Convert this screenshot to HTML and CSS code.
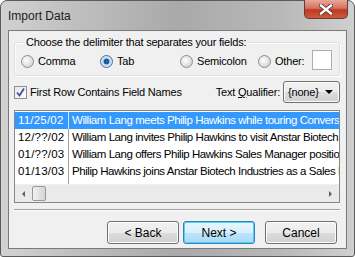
FILE: index.html
```html
<!DOCTYPE html>
<html lang="en">
<head>
    <meta charset="UTF-8">
    <title>Import Data</title>
    <link rel="stylesheet" href="styles.css">
</head>
<body>
    <div class="window">
        <div class="titlebar">
            <span class="title">Import Data</span>
            <div class="close">
                <svg width="14" height="11" viewBox="0 0 14 11">
                    <path d="M2 1.5 L12 9.5 M12 1.5 L2 9.5" stroke="#4a2a28" stroke-width="4" stroke-linecap="square"/>
                    <path d="M2 1.5 L12 9.5 M12 1.5 L2 9.5" stroke="#fff" stroke-width="2.4" stroke-linecap="square"/>
                </svg>
            </div>
        </div>
        <div class="client">
            <div class="group">
                <div class="legend">Choose the delimiter that separates your fields:</div>
                <div class="radios">
                    <label class="radio"><span class="dot"></span>Comma</label>
                    <label class="radio checked"><span class="dot"></span>Tab</label>
                    <label class="radio"><span class="dot"></span>Semicolon</label>
                    <label class="radio"><span class="dot"></span>Other:</label>
                    <span class="other-box"></span>
                </div>
            </div>

            <div class="options">
                <label class="check">
                    <span class="box">
                        <svg width="11" height="11" viewBox="0 0 11 11">
                            <path d="M2 5.5 L4.5 8.5 L9 1.5" fill="none" stroke="#3b50a0" stroke-width="1.8"/>
                        </svg>
                    </span>
                    First Row Contains Field Names
                </label>
                <span class="qualifier">Text <u>Q</u>ualifier:</span>
                <div class="select">
                    <span>{none}</span>
                    <span class="arrow"></span>
                </div>
            </div>

            <div class="listbox">
                <div class="rows">
                    <div class="row selected"><span class="date">11/25/02</span><span class="desc">William Lang meets Philip Hawkins while touring Conversion</span></div>
                    <div class="row"><span class="date">12/??/02</span><span class="desc">William Lang invites Philip Hawkins to visit Anstar Biotech</span></div>
                    <div class="row"><span class="date">01/??/03</span><span class="desc">William Lang offers Philip Hawkins Sales Manager position</span></div>
                    <div class="row"><span class="date">01/13/03</span><span class="desc">Philip Hawkins joins Anstar Biotech Industries as a Sales Manager</span></div>
                    <div class="row empty"><span class="date"></span><span class="desc"></span></div>
                </div>
                <div class="hscroll">
                    <span class="arr left"></span>
                    <div class="track"><span class="thumb"></span></div>
                    <span class="arr right"></span>
                </div>
            </div>

            <div class="separator"></div>

            <div class="buttons">
                <button class="btn">&lt; Back</button>
                <button class="btn default">Next &gt;</button>
                <button class="btn cancel">Cancel</button>
            </div>
        </div>
    </div>
</body>
</html>
```

FILE: styles.css
```css
body {
    margin: 0;
    width: 355px;
    height: 257px;
    overflow: hidden;
    background: #fff;
    font-family: "Liberation Sans", Arial, sans-serif;
    font-size: 11px;
    letter-spacing: -0.2px;
    color: #000;
}

.window {
    box-sizing: border-box;
    width: 355px;
    height: 257px;
    border: 1px solid #5b5b5b;
    border-radius: 7px 7px 3px 3px;
    background: linear-gradient(90deg, #d2d2d2 0%, #c0c0c0 20%, #a9a9a9 50%, #b9b9b9 80%, #cfcfcf 100%);
    display: flex;
    flex-direction: column;
}

.titlebar {
    height: 29px;
    display: flex;
    align-items: flex-start;
    padding: 0 6px 0 7px;
}

.title {
    font-size: 12px;
    letter-spacing: 0;
    margin-top: 8px;
    color: #1b1b1b;
}

.close {
    margin-left: auto;
    margin-top: -1px;
    width: 44px;
    height: 19px;
    box-sizing: border-box;
    border: 1px solid #6b3a36;
    border-top: none;
    border-radius: 0 0 5px 5px;
    background: linear-gradient(#e8a89b 0%, #d6735e 45%, #c0391f 55%, #cc5a3c 100%);
    display: flex;
    align-items: center;
    justify-content: center;
}

.client {
    flex: 1;
    margin: 0 7px 7px 7px;
    border: 1px solid #7a7a7a;
    background: #f0f0f0;
    padding: 11px 6px 0 5px;
    display: flex;
    flex-direction: column;
}

.group {
    border: 1px solid #d5dfe5;
    border-radius: 3px;
    height: 32px;
    box-shadow: inset 1px 1px 0 #fff, 1px 1px 0 #fff;
}

.legend {
    background: #f0f0f0;
    margin: -7px 0 0 8px;
    padding: 0 3px;
    width: max-content;
    line-height: 13px;
}

.radios {
    display: flex;
    align-items: center;
    margin: 3px 0 0 6px;
}

.radio {
    display: flex;
    align-items: center;
    gap: 4px;
}

.radio:nth-child(1) { width: 79px; }
.radio:nth-child(2) { width: 80px; }
.radio:nth-child(3) { width: 78px; }

.dot {
    width: 11px;
    height: 11px;
    border-radius: 50%;
    border: 1px solid #8d8d8d;
    background: radial-gradient(circle at 40% 40%, #ffffff 0%, #e6e6e6 45%, #c8c8c8 100%);
}

.radio.checked .dot {
    border-color: #4a6e9a;
    background: radial-gradient(circle, #1e7fd0 0%, #0d4f8e 30%, #bcd4ea 42%, #f2f6fa 100%);
}

.other-box {
    margin-left: 8px;
    margin-top: -2px;
    width: 18px;
    height: 18px;
    border: 1px solid #abadb3;
    background: #fff;
}

.options {
    display: flex;
    align-items: center;
    margin-top: 5px;
    height: 22px;
}

.check {
    display: flex;
    align-items: center;
    gap: 3px;
}

.box {
    width: 11px;
    height: 11px;
    border: 1px solid #8e8f8f;
    background: linear-gradient(135deg, #e6e6e6, #fff);
    display: flex;
}

.qualifier {
    margin-left: auto;
    margin-right: 3px;
}

.select {
    width: 45px;
    height: 20px;
    border: 1px solid #707070;
    border-radius: 3px;
    background: linear-gradient(#f2f2f2 0%, #ebebeb 50%, #dddddd 51%, #cfcfcf 100%);
    display: flex;
    align-items: center;
    justify-content: space-between;
    padding: 0 6px 0 4px;
    box-shadow: inset 0 0 0 1px #fcfcfc;
}

.arrow {
    width: 0;
    height: 0;
    border-left: 4px solid transparent;
    border-right: 4px solid transparent;
    border-top: 4px solid #000;
}

.listbox {
    margin-top: 7px;
    height: 91px;
    border: 1px solid #828790;
    background: #fff;
    display: flex;
    flex-direction: column;
    overflow: hidden;
}

.rows {
    flex: 1;
    overflow: hidden;
    padding-top: 1px;
}

.row {
    display: flex;
    height: 17px;
    line-height: 17px;
    white-space: nowrap;
    font-size: 11.5px;
    letter-spacing: -0.45px;
}

.row.empty {
    height: 6px;
}

.date {
    width: 54px;
    flex: none;
    padding-left: 3px;
    box-sizing: border-box;
    border-right: 1px solid #a0a0a0;
    letter-spacing: 0.2px;
}

.desc {
    padding-left: 3px;
}

.row.selected {
    background: #3399ff;
    color: #fff;
}

.row.selected .date {
    border-right-color: #cce4ff;
}

.hscroll {
    height: 17px;
    display: flex;
    align-items: center;
    background: #eaeaea;
    border-top: 1px solid #f0f0f0;
}

.arr {
    width: 17px;
    height: 17px;
    display: flex;
    align-items: center;
    justify-content: center;
}

.arr::before {
    content: "";
    border-top: 3px solid transparent;
    border-bottom: 3px solid transparent;
}

.arr.left::before {
    border-right: 3px solid #606060;
}

.arr.right::before {
    border-left: 3px solid #606060;
}

.track {
    flex: 1;
    height: 17px;
    display: flex;
    align-items: center;
}

.thumb {
    width: 14px;
    height: 15px;
    border: 1px solid #979797;
    border-radius: 2px;
    background: linear-gradient(90deg, #f3f3f3, #e2e2e2 50%, #d6d6d6);
    box-sizing: border-box;
}

.separator {
    margin-top: 6px;
    border-top: 1px solid #a0a0a0;
    border-bottom: 1px solid #fff;
}

.buttons {
    display: flex;
    justify-content: flex-end;
    margin-top: 10px;
    padding-right: 3px;
}

.btn {
    width: 72px;
    height: 23px;
    border: 1px solid #707070;
    border-radius: 3px;
    background: linear-gradient(#f2f2f2 0%, #ebebeb 50%, #dddddd 51%, #cfcfcf 100%);
    box-shadow: inset 0 0 0 1px #fcfcfc;
    font-family: "Liberation Sans", Arial, sans-serif;
    font-size: 12px;
    color: #000;
    padding: 0;
    margin-left: 4px;
}

.btn.default {
    border-color: #3c7fb1;
    background: linear-gradient(#eaf6fd 0%, #d9f0fc 50%, #bee6fd 51%, #a7d9f5 100%);
    box-shadow: inset 0 0 0 1px #48d3fb;
}

.btn.cancel {
    margin-left: 10px;
}
```
